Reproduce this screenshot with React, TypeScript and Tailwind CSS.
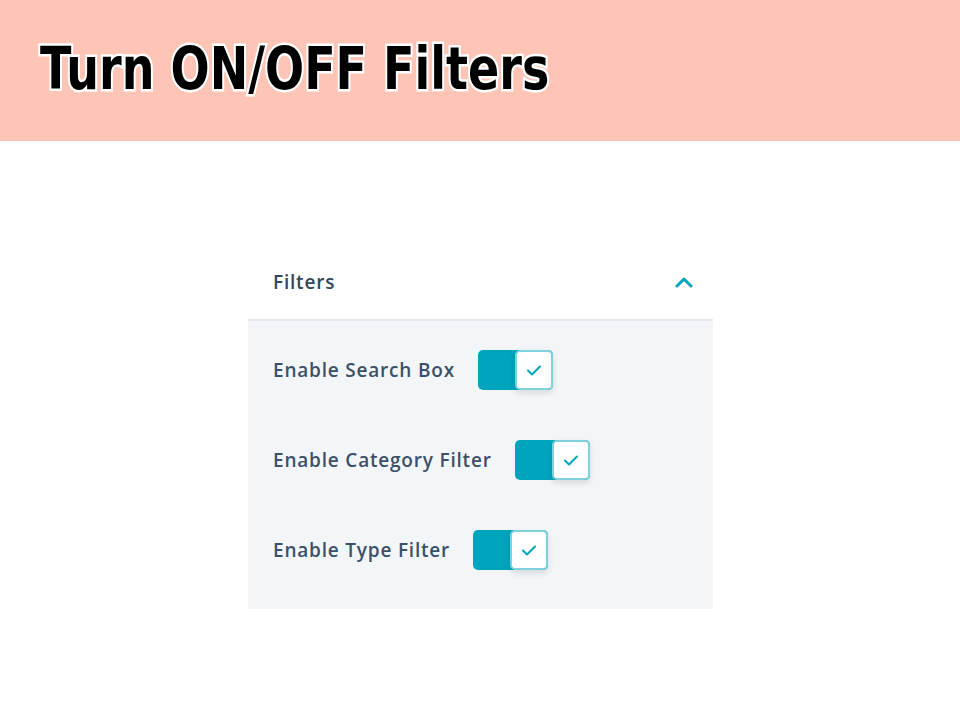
import React, { useState } from 'react';

const rows = [
  { id: 'search', label: 'Enable Search Box' },
  { id: 'category', label: 'Enable Category Filter' },
  { id: 'type', label: 'Enable Type Filter' },
];

function Toggle({ on, onClick }: { on: boolean; onClick: () => void }) {
  return (
    <button
      onClick={onClick}
      className={`relative flex h-[40px] w-[75px] rounded-[5px] ${on ? 'bg-[#00a4bd]' : 'bg-[#cbd6e2]'}`}
    >
      <span
        className={`absolute top-0 flex h-[40px] w-[38px] items-center justify-center rounded-[5px] border-2 border-[#7fd1de] bg-white shadow-[0_3px_6px_rgba(0,0,0,0.12)] ${on ? 'right-0' : 'left-0'}`}
      >
        {on && (
          <svg width="16" height="12" viewBox="0 0 16 12" fill="none">
            <path d="M2 6.5l4 4 8-8" stroke="#00a4bd" strokeWidth="2" strokeLinecap="round" strokeLinejoin="round" />
          </svg>
        )}
      </span>
    </button>
  );
}

export default function App() {
  const [state, setState] = useState<Record<string, boolean>>({ search: true, category: true, type: true });

  return (
    <div className="h-[720px] w-[960px] bg-white">
      <div className="flex h-[141px] items-center bg-[#fec4b6] pb-[3px] pl-[40px]">
        <h1
          className="origin-left scale-x-[0.78] whitespace-nowrap text-[59px] font-bold text-black [paint-order:stroke_fill] [-webkit-text-stroke:5px_white]"
          style={{ fontFamily: '"DejaVu Sans", sans-serif' }}
        >
          Turn ON/OFF Filters
        </h1>
      </div>

      <div className="ml-[248px] mt-[114px] w-[465px]" style={{ fontFamily: '"Open Sans", sans-serif' }}>
        <div className="flex h-[66px] items-start justify-between border-b-2 border-[#e5e9ee] pl-[25px] pr-[20px] pt-[13px]">
          <span className="text-[19px] font-semibold tracking-[0.8px] text-[#33475b]">Filters</span>
          <svg width="18" height="12" viewBox="0 0 18 12" fill="none" className="mt-[8px]">
            <path d="M2 10l7-7 7 7" stroke="#00a4bd" strokeWidth="3" strokeLinecap="round" strokeLinejoin="round" />
          </svg>
        </div>
        <div className="flex h-[288px] flex-col gap-[50px] bg-[#f3f6f9] pl-[25px] pt-[29px]">
          {rows.map((r) => (
            <div key={r.id} className="flex items-center gap-[23px]">
              <span className="text-[19px] font-semibold tracking-[0.8px] text-[#3c5068]">{r.label}</span>
              <Toggle on={state[r.id]} onClick={() => setState({ ...state, [r.id]: !state[r.id] })} />
            </div>
          ))}
        </div>
      </div>
    </div>
  );
}
